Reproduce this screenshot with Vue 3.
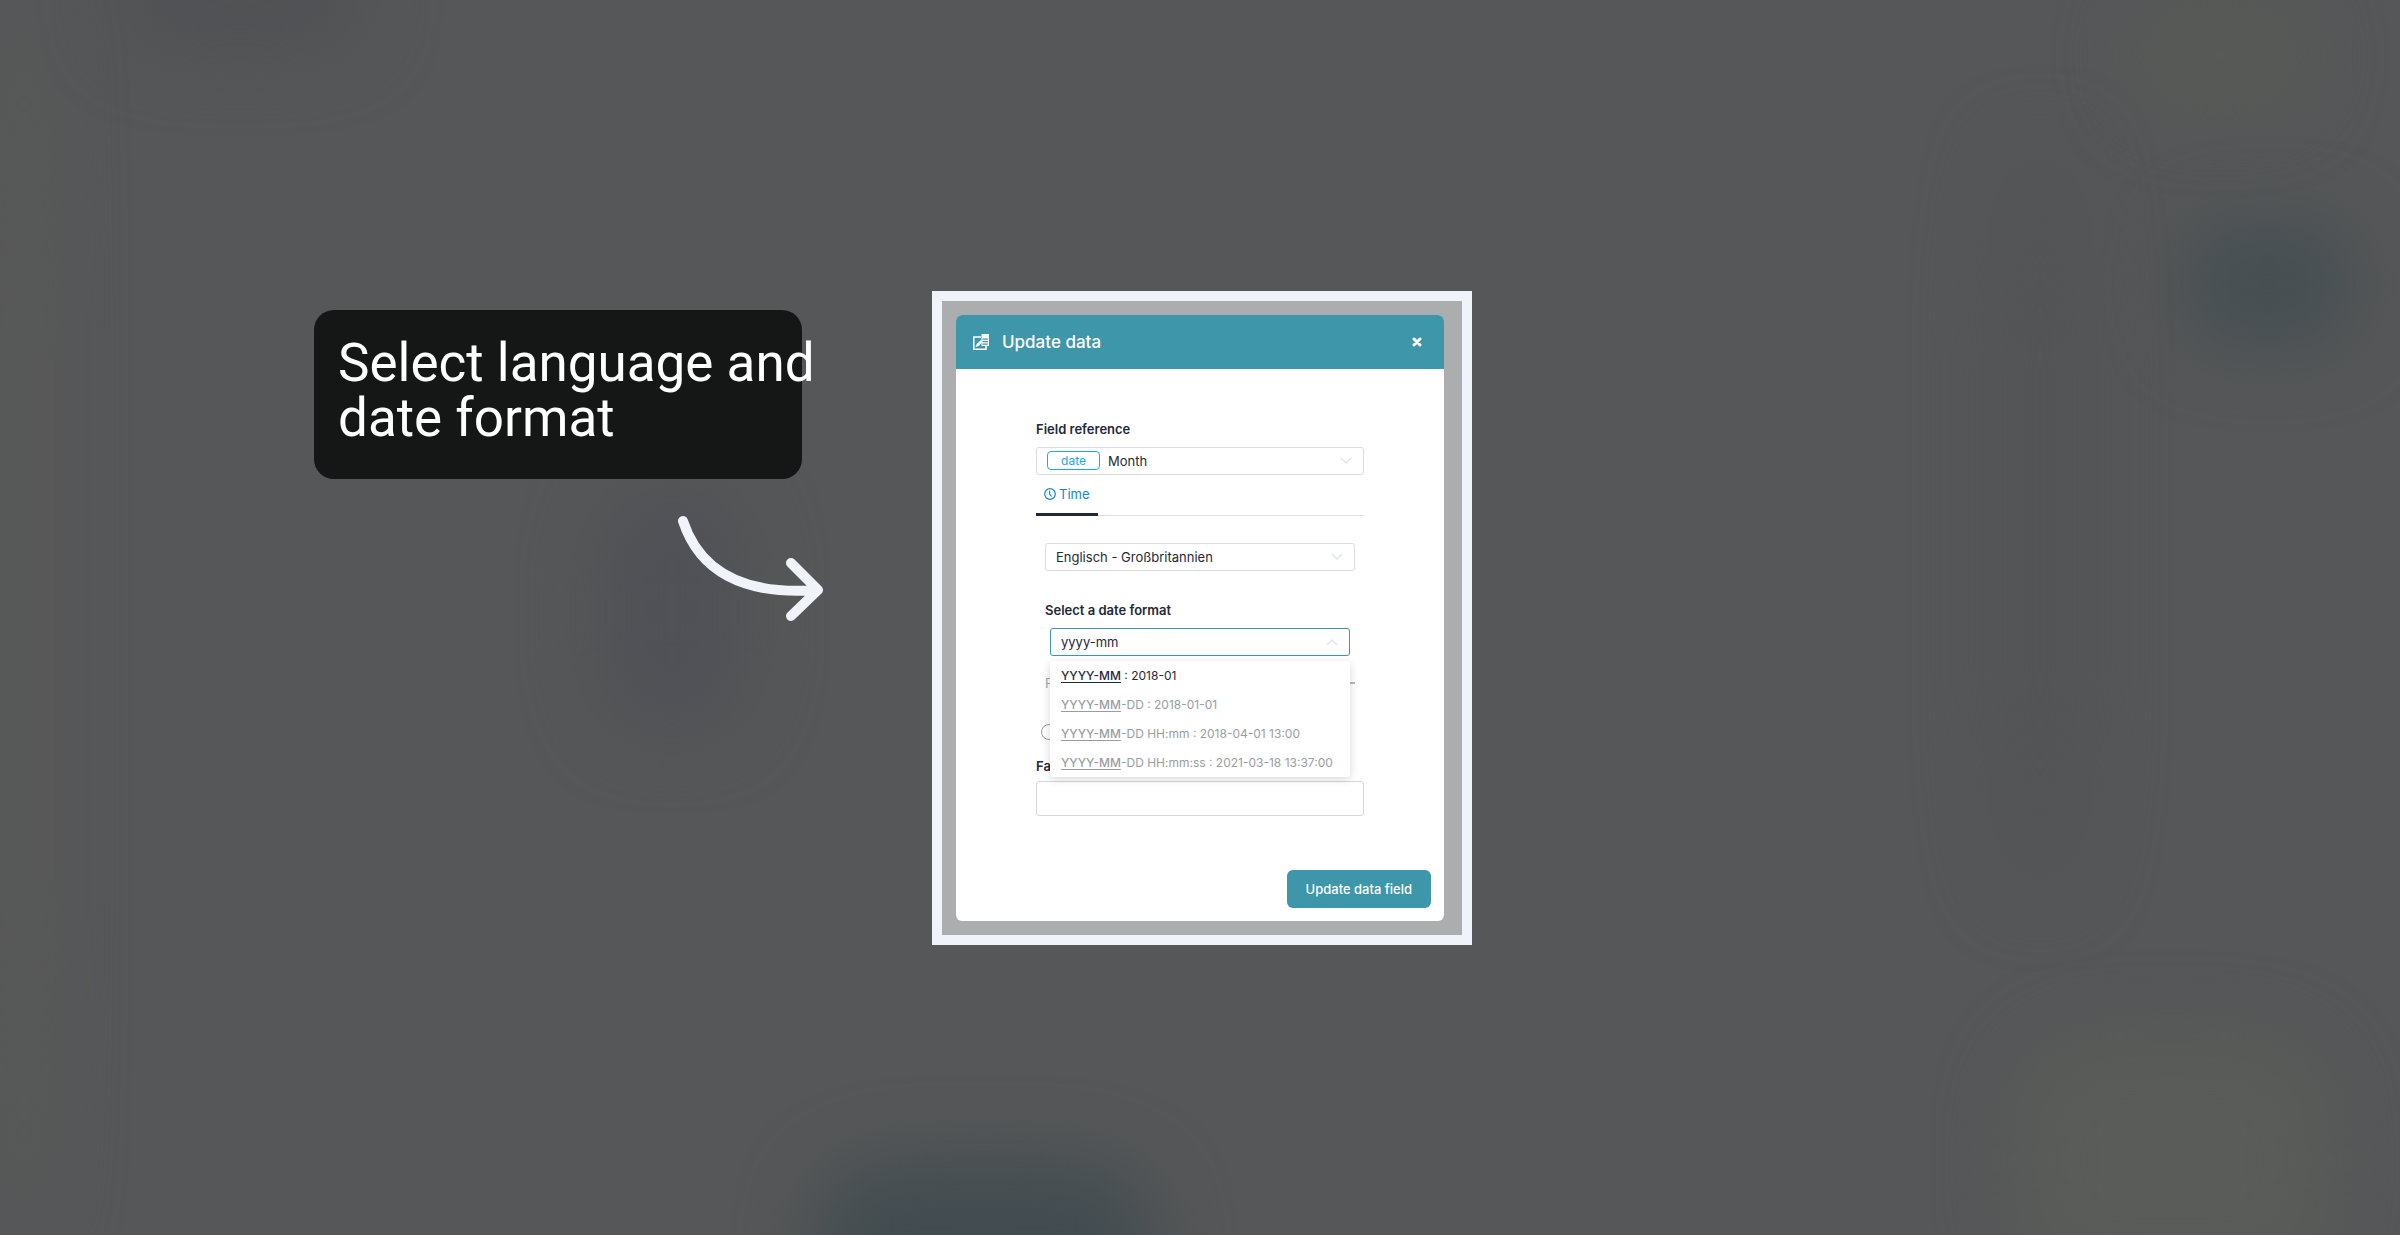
<script setup>
import { computed, ref } from "vue";

const field = ref("Month");
const language = ref("Englisch - Großbritannien");
const query = ref("yyyy-mm");
const fallback = ref("");

const formats = [
  { pattern: "YYYY-MM", example: "2018-01" },
  { pattern: "YYYY-MM-DD", example: "2018-01-01" },
  { pattern: "YYYY-MM-DD HH:mm", example: "2018-04-01 13:00" },
  { pattern: "YYYY-MM-DD HH:mm:ss", example: "2021-03-18 13:37:00" },
];

const matches = computed(() =>
  formats
    .filter((f) => f.pattern.toLowerCase().startsWith(query.value.toLowerCase()))
    .map((f) => ({
      ...f,
      match: f.pattern.slice(0, query.value.length),
      rest: f.pattern.slice(query.value.length),
    }))
);

const selectFormat = (format) => {
  query.value = format.pattern;
};
</script>

<template>
  <main class="stage">
    <div class="backdrop">
      <span v-for="n in 8" :key="n" class="blob" :class="`blob-${n}`"></span>
    </div>

    <aside class="annotation">
      <p class="note">Select language and<br />date format</p>
      <svg class="note-arrow" viewBox="0 0 148 108" fill="none">
        <path d="M7 11C23 60 66 86 142 80M115 53L142 80L115 106" stroke="#f0f3f9" stroke-width="10" stroke-linecap="round" stroke-linejoin="round" />
      </svg>
    </aside>

    <section class="frame">
      <div class="modal" role="dialog" aria-labelledby="modal-title">
        <header class="modal-header">
          <svg class="modal-icon" viewBox="0 0 18 18" fill="none">
            <path d="M9 4H1.800V16.300H14V13" stroke="#fff" stroke-width="1.500" />
            <path d="M9.500 1H17V13H9.500Z" fill="#fff" />
            <path d="M10.500 6.200H15.800M10.500 8.700H15.800M10.500 11.200H15.800" stroke="#3d96a9" stroke-width="1.200" />
            <path d="M3.500 14L4.800 10.800L9 7L10.500 9L6.800 13Z" fill="#fff" />
          </svg>
          <h1 id="modal-title">Update data</h1>
          <button class="close" type="button" aria-label="Close">
            <svg viewBox="0 0 10 10" fill="none">
              <path d="M2 2L8 8M8 2L2 8" stroke="#fff" stroke-width="3" stroke-linecap="round" />
            </svg>
          </button>
        </header>

        <form class="modal-body" @submit.prevent>
          <label class="label" for="field">Field reference</label>
          <div class="control">
            <span class="tag">date</span>
            <select id="field" v-model="field">
              <option>Month</option>
            </select>
            <svg class="chevron" viewBox="0 0 12 8" fill="none">
              <path d="M1 1L6 6L11 1" stroke="currentColor" stroke-width="1.500" />
            </svg>
          </div>

          <nav class="tabs">
            <button class="tab active" type="button">
              <svg viewBox="0 0 12 12" fill="none">
                <circle cx="6" cy="6" r="5.300" stroke="currentColor" stroke-width="1.200" />
                <path d="M5.600 2.500V6.200L7.600 8.500" stroke="currentColor" stroke-width="1.100" />
              </svg>
              Time
            </button>
          </nav>

          <div class="panel">
            <div class="control">
              <select v-model="language" aria-label="Language">
                <option>Englisch - Großbritannien</option>
              </select>
              <svg class="chevron" viewBox="0 0 12 8" fill="none">
                <path d="M1 1L6 6L11 1" stroke="currentColor" stroke-width="1.500" />
              </svg>
            </div>

            <label class="label format-label" for="format">Select a date format</label>
            <div class="combo">
              <div class="control focused">
                <input id="format" v-model="query" type="text" autocomplete="off" />
                <svg class="chevron" viewBox="0 0 12 8" fill="none">
                  <path d="M1 7L6 2L11 7" stroke="currentColor" stroke-width="1.500" />
                </svg>
              </div>
              <ul class="options">
                <li v-for="(f, i) in matches" :key="f.pattern" :class="{ current: i === 0 }" @click="selectFormat(f)">
                  <span class="match">{{ f.match }}</span>{{ f.rest }} : {{ f.example }}
                </li>
              </ul>
            </div>

            <div class="preview"><span>P</span></div>
          </div>

          <input class="radio" type="radio" aria-label="Use fallback" />

          <label class="label" for="fallback">Fa</label>
          <input id="fallback" v-model="fallback" class="fallback" type="text" />
        </form>

        <footer class="modal-footer">
          <button class="submit" type="button">Update data field</button>
        </footer>
      </div>
    </section>
  </main>
</template>

<style>
body {
  margin: 0;
  background: #565758;
}
</style>

<style scoped>
* {
  box-sizing: border-box;
}

.stage {
  position: relative;
  display: grid;
  grid-template-columns: 1fr 540px 1fr;
  align-content: center;
  column-gap: 108px;
  min-height: 100vh;
  padding-left: 4px;
  overflow: hidden;
  background: #565758;
  color: #1e293b;
  font-family: Inter, "Liberation Sans", sans-serif;
  font-size: 13px;
  line-height: 20px;
}

button,
input,
select {
  font: inherit;
  color: inherit;
}

.backdrop {
  position: absolute;
  inset: 0;
}

.blob {
  position: absolute;
  border-radius: 30%;
  filter: blur(36px);
}

.blob-1 {
  left: 34%;
  top: 94%;
  width: 14%;
  height: 16%;
  background: #424c50;
}

.blob-2 {
  left: 91%;
  top: 18%;
  width: 7%;
  height: 10%;
  background: #464f52;
}

.blob-3 {
  left: 25%;
  top: 40%;
  width: 6%;
  height: 19%;
  background: #505156;
}

.blob-4 {
  left: 84%;
  top: 84%;
  width: 13%;
  height: 20%;
  background: #5a5c59;
}

.blob-5 {
  left: 83%;
  top: 12%;
  width: 4%;
  height: 60%;
  background: #535455;
}

.blob-6 {
  left: 0;
  top: 0;
  width: 2%;
  height: 100%;
  background: #595a58;
}

.blob-7 {
  left: 5%;
  top: -4%;
  width: 10%;
  height: 8%;
  background: #4f5154;
}

.blob-8 {
  left: 89%;
  top: 0;
  width: 7%;
  height: 9%;
  background: #585a57;
}

.annotation {
  position: relative;
  display: flex;
  flex-direction: column;
  align-items: flex-end;
  padding-top: 19px;
}

.note {
  width: 488px;
  height: 169px;
  margin: 0 22px 0 0;
  padding: 26px 24px;
  border-radius: 20px;
  background: #151616;
  color: #fff;
  font-family: Roboto, Inter, sans-serif;
  font-size: 53px;
  line-height: 55px;
  white-space: nowrap;
}

.note-arrow {
  width: 148px;
  height: 108px;
  margin-top: 31px;
  overflow: visible;
}

.frame {
  position: relative;
  padding: 14px;
  border: 10px solid #f0f3f9;
  background: #acadaf;
}

.modal {
  margin-right: 4px;
  border-radius: 6px;
  background: #fff;
}

.modal-header {
  display: flex;
  align-items: center;
  height: 54px;
  padding: 0 20px 0 16px;
  border-radius: 6px 6px 0 0;
  background: #3d96a9;
  color: #fff;
}

.modal-icon {
  width: 18px;
  height: 18px;
}

h1 {
  flex: 1;
  margin: 0 0 0 12px;
  font-size: 17px;
  font-weight: 500;
}

.close {
  display: flex;
  padding: 0;
  border: 0;
  background: none;
}

.close svg {
  width: 14px;
  height: 10px;
}

.modal-body {
  display: flex;
  flex-direction: column;
  padding: 50px 80px 0;
}

.label {
  font-weight: 600;
}

.control {
  position: relative;
  display: flex;
  align-items: center;
  height: 28px;
  padding: 0 11px 0 10px;
  border: 1px solid #d9dce2;
  border-radius: 3px;
  background: #fff;
}

.modal-body > .control {
  margin-top: 8px;
}

.control select,
.control input {
  flex: 1;
  min-width: 0;
  padding: 0;
  border: 0;
  outline: 0;
  appearance: none;
  background: none;
}

.control.focused {
  border-color: #3d96a9;
}

.chevron {
  width: 12px;
  height: 8px;
  color: #e2e6ec;
}

.tag {
  width: 53px;
  height: 19px;
  margin-right: 8px;
  border: 1px solid #1ea7e8;
  border-radius: 4px;
  color: #1ea7e8;
  font-size: 12px;
  line-height: 17px;
  text-align: center;
}

.tabs {
  display: flex;
  border-bottom: 1px solid #dcdee1;
}

.tab {
  display: flex;
  align-items: center;
  gap: 3px;
  height: 41px;
  margin-bottom: -1px;
  padding: 0 8px;
  border: 0;
  background: none;
  color: #1583dc;
}

.tab.active {
  border-bottom: 3px solid #1e293b;
}

.tab svg {
  width: 12px;
  height: 12px;
}

.panel {
  display: flex;
  flex-direction: column;
  padding: 27px 9px 0;
}

.format-label {
  margin-top: 29px;
}

.combo {
  position: relative;
  margin: 8px 5px 0;
}

.options {
  position: absolute;
  z-index: 1;
  top: 33px;
  left: 0;
  right: 0;
  margin: 0;
  padding: 0;
  border-radius: 3px;
  background: #fff;
  box-shadow: 0 2px 8px rgba(0, 0, 0, 0.16);
  color: #999da3;
  font-size: 12px;
  list-style: none;
}

.options li {
  padding: 0 11px;
  line-height: 29px;
  white-space: nowrap;
  cursor: pointer;
}

.options .current {
  color: #1e293b;
}

.match {
  font-weight: 500;
  text-decoration: underline;
  text-underline-offset: 2px;
}

.preview {
  display: flex;
  align-items: center;
  margin-top: 17px;
  color: #a3a7ad;
}

.preview::after {
  content: "";
  flex: 1;
  height: 2px;
  margin-left: 8px;
  background: #b4b7bc;
}

.radio {
  width: 16px;
  height: 16px;
  margin: 31px 5px 16px;
  border: 1px solid #999da3;
  border-radius: 50%;
  appearance: none;
}

.fallback {
  height: 35px;
  margin-top: 5px;
  padding: 0 10px;
  border: 1px solid #d3d6df;
  border-radius: 3px;
  outline: 0;
}

.modal-footer {
  display: flex;
  justify-content: flex-end;
  padding: 54px 13px 13px;
}

.submit {
  height: 38px;
  padding: 0 19px;
  border: 0;
  border-radius: 6px;
  background: #3d96a9;
  color: #fff;
  font-weight: 500;
}
</style>
